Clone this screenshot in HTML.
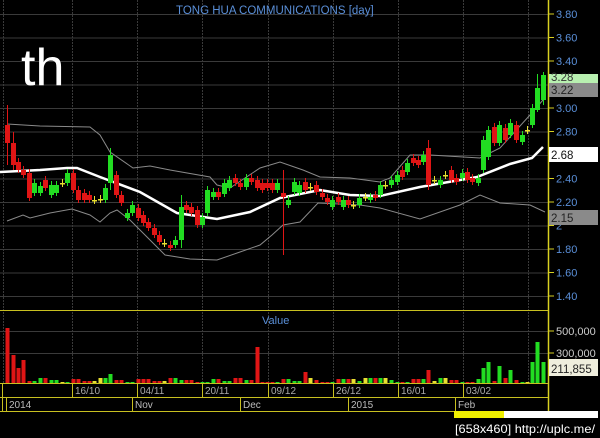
<!DOCTYPE html>
<html><head><meta charset="utf-8">
<style>
html,body{margin:0;padding:0;background:#000;width:600px;height:438px;overflow:hidden;}
svg{display:block;font-family:"Liberation Sans",sans-serif;}
</style></head>
<body>
<svg id="s" width="600" height="438" viewBox="0 0 600 438" xmlns="http://www.w3.org/2000/svg">
<rect width="600" height="438" fill="#000"/>
<g id="grid" stroke="#3a3a3a" stroke-width="1"></g>
<g id="bands" fill="none"></g>
<g id="candles"></g>
<g id="vol"></g>
<g id="axis"></g>
<text x="21" y="85" font-size="52" fill="#fff">th</text>
<text x="176" y="14" font-size="11.5" fill="#5a8fd8">TONG HUA COMMUNICATIONS [day]</text>
<text x="262" y="324" font-size="11" fill="#5a8fd8">Value</text>
</svg>
<script>
var NS="http://www.w3.org/2000/svg";
function el(p,t,a,txt){var e=document.createElementNS(NS,t);for(var k in a)e.setAttribute(k,a[k]);if(txt!=null)e.textContent=txt;document.getElementById(p).appendChild(e);return e;}
for(var i=0;i<13;i++){var y=14+23.5*i+0.5;el('grid','line',{x1:0,x2:548,y1:y,y2:y});}
[3,72,137,202,268,333,398,463,528].forEach(function(x){el('grid','line',{x1:x+.5,x2:x+.5,y1:0,y2:383,'stroke-dasharray':'2,1'});});
[331,353].forEach(function(y){el('grid','line',{x1:0,x2:548,y1:y+.5,y2:y+.5});});
function pl(pts,c,w){el('bands','polyline',{points:pts.map(function(p){return p.join(',')}).join(' '),stroke:c,'stroke-width':w,fill:'none'});}
pl([[7,124],[40,126],[90,127],[100,135],[110,152],[133,168],[150,166],[170,170],[210,177],[217,185],[230,188],[260,168],[280,162],[303,170],[320,177],[350,178],[380,182],[390,178],[410,155],[430,155],[480,158],[500,148],[530,115],[543,100]],'#8a8a8a',1);
pl([[7,221],[23,215],[30,218],[50,213],[72,209],[90,215],[100,222],[110,213],[117,210],[130,220],[150,240],[165,255],[190,259],[217,260],[240,252],[260,245],[272,235],[283,225],[300,222],[318,203],[360,205],[380,208],[420,219],[460,205],[480,195],[500,203],[530,205],[545,212]],'#8a8a8a',1);
pl([[0,172],[40,170],[67,168],[77,168],[100,177],[140,192],[177,213],[217,219],[250,212],[280,198],[320,190],[350,195],[380,196],[420,187],[477,177],[510,164],[532,158],[543,147]],'#fff',2.5);
var C=[[7,125,143,'r'],[13,143,165,'r'],[18,162,170,'r'],[23,170,175,'r'],[29,173,198,'r'],[34,183,193,'g'],[40,186,193,'g'],[45,180,188,'r'],[51,185,195,'g'],[56,185,193,'g'],[62,183,184,'y'],[67,173,183,'g'],[73,173,190,'r'],[78,190,200,'r'],[84,193,200,'r'],[89,195,200,'r'],[94,200,201,'y'],[100,199,200,'y'],[105,188,200,'g'],[110,155,183,'g'],[116,175,195,'r'],[121,195,203,'r'],[127,213,218,'g'],[132,205,213,'g'],[138,208,218,'r'],[143,215,223,'r'],[148,222,228,'r'],[154,228,235,'r'],[159,235,242,'r'],[164,243,244,'y'],[170,245,248,'r'],[175,240,245,'g'],[181,207,240,'g'],[186,205,210,'r'],[191,207,213,'r'],[197,210,225,'r'],[202,217,225,'g'],[207,190,213,'g'],[213,192,197,'g'],[218,192,197,'r'],[224,183,194,'g'],[229,180,188,'g'],[235,178,183,'r'],[240,183,187,'r'],[246,178,187,'g'],[251,178,182,'r'],[257,180,188,'r'],[262,183,190,'r'],[267,183,188,'r'],[272,183,190,'r'],[277,183,190,'g'],[283,193,197,'r'],[288,200,205,'g'],[294,182,192,'g'],[299,185,193,'g'],[305,182,190,'r'],[310,187,188,'y'],[316,185,192,'r'],[322,193,197,'r'],[327,198,202,'r'],[332,200,207,'g'],[338,197,202,'r'],[343,200,207,'g'],[348,200,205,'r'],[353,205,206,'y'],[359,198,205,'g'],[365,197,198,'y'],[370,197,200,'g'],[375,195,198,'r'],[380,185,195,'g'],[385,185,186,'y'],[391,180,185,'g'],[397,175,182,'g'],[402,170,177,'r'],[407,163,172,'g'],[413,158,163,'r'],[418,160,165,'r'],[423,155,162,'g'],[428,148,185,'r'],[434,180,181,'y'],[440,180,185,'g'],[445,175,176,'y'],[451,170,180,'r'],[456,178,182,'r'],[462,173,178,'g'],[467,172,180,'r'],[472,178,182,'r'],[478,178,183,'g'],[483,140,170,'g'],[488,130,157,'g'],[494,127,143,'r'],[499,125,143,'g'],[505,128,140,'r'],[510,123,135,'g'],[516,125,140,'r'],[522,135,142,'g'],[527,130,131,'y'],[532,108,125,'g'],[537,88,110,'g'],[543,75,100,'g']];
var col={r:'#e01515',g:'#22dd22',y:'#e8e030'};
var wick={7:[105,165],283:[170,255],428:[140,190],110:[148,190],181:[195,248],537:[74,112],543:[72,105],13:[132,170]};
var V={7:328,13:355,18:368,23:360,110:374,185:367,257:347,305:372,428:370,483:368,488:362,499:366,510:370,532:362,537:342,543:362,194:376,350:376};
C.forEach(function(c){var x=c[0],t=c[1],b=c[2],k=col[c[3]];var w=wick[x]||[t-4,b+3];
el('candles','line',{x1:x+.5,x2:x+.5,y1:w[0],y2:w[1],stroke:k,'stroke-width':1});
el('candles','rect',{x:x-2,y:t,width:5,height:Math.max(b-t,1.5),fill:k});
var vt=V[x]||(378+((x*7)%5));el('vol','rect',{x:x-1.5,y:vt,width:4,height:383-vt,fill:k});});
var A='axis';
el(A,'line',{x1:548.5,x2:548.5,y1:0,y2:411,stroke:'#d8d020','stroke-width':1.5});
[310,383,397,411].forEach(function(y){el(A,'line',{x1:0,x2:548,y1:y+.5,y2:y+.5,stroke:'#c8c020','stroke-width':1});});
el(A,'line',{x1:2.5,x2:2.5,y1:383,y2:411,stroke:'#c8c020'});
[72,137,202,268,333,398,463].forEach(function(x){el(A,'line',{x1:x+.5,x2:x+.5,y1:383,y2:397,stroke:'#c8c020'});});
[6,132,240,348,455].forEach(function(x){el(A,'line',{x1:x+.5,x2:x+.5,y1:397,y2:411,stroke:'#c8c020'});});
[[75,'16/10'],[140,'04/11'],[205,'20/11'],[271,'09/12'],[336,'26/12'],[401,'16/01'],[466,'03/02']].forEach(function(d){el(A,'text',{x:d[0],y:394,'font-size':10,fill:'#aaa'},d[1]);});
[[9,'2014'],[135,'Nov'],[243,'Dec'],[351,'2015'],[458,'Feb']].forEach(function(d){el(A,'text',{x:d[0],y:408,'font-size':10,fill:'#bbb'},d[1]);});
var P=['3.80','3.60','3.40','3.20','3.00','2.80','2.60','2.40','2.20','2','1.80','1.60','1.40'];
P.forEach(function(p,i){var y=14+23.5*i;el(A,'line',{x1:548,x2:554,y1:y,y2:y,stroke:'#d8d020'});el(A,'text',{x:556,y:y+4,'font-size':11,fill:'#5a8fd8'},p);});
[[331,'500,000'],[353,'300,000']].forEach(function(d){el(A,'line',{x1:548,x2:554,y1:d[0],y2:d[0],stroke:'#d8d020'});el(A,'text',{x:556,y:d[0]+4,'font-size':11,fill:'#ccc'},d[1]);});
function box(y,h,bg,fg,t){el(A,'rect',{x:549,y:y,width:49,height:h,fill:bg});el(A,'text',{x:551,y:y+h-3,'font-size':11.5,fill:fg},t);}
box(74,10,'#b8f0b0','#333','3.28');
box(83,14,'#8a8a8a','#222','3.22');
box(147,15,'#fff','#111','2.68');
box(210,15,'#8a8a8a','#222','2.15');
box(359,17,'#efeedd','#222','211,855');
el(A,'rect',{x:454,y:411,width:50,height:7,fill:'#f0f000'});
el(A,'rect',{x:504,y:411,width:94,height:7,fill:'#fff'});
el(A,'text',{x:455,y:433,'font-size':12,fill:'#fff',textLength:140,lengthAdjust:'spacingAndGlyphs'},'[658x460] http://uplc.me/');
</script>
</body></html>
